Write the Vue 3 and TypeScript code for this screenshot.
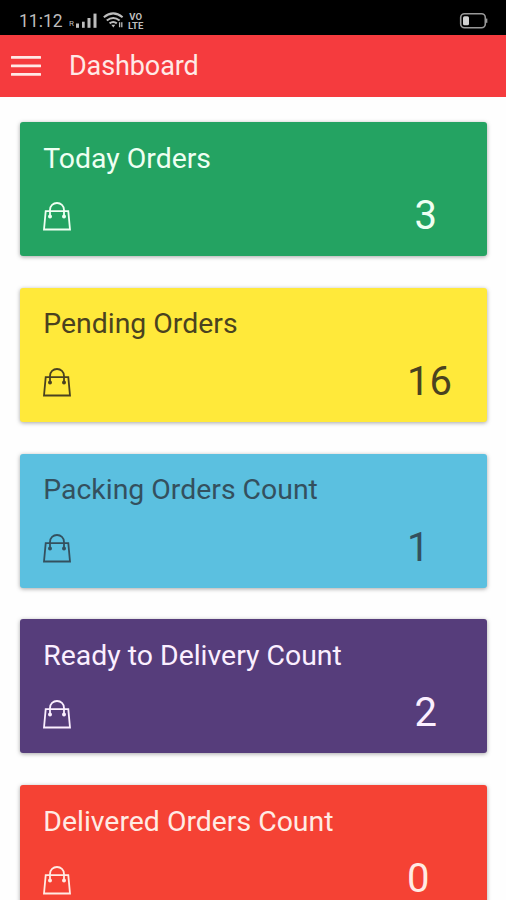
<script setup lang="ts">
interface OrderCard {
  title: string
  count: number
  tone: 'green' | 'yellow' | 'blue' | 'purple' | 'red'
  inset?: boolean
}

const cards: OrderCard[] = [
  { title: 'Today Orders', count: 3, tone: 'green', inset: true },
  { title: 'Pending Orders', count: 16, tone: 'yellow' },
  { title: 'Packing Orders Count', count: 1, tone: 'blue' },
  { title: 'Ready to Delivery Count', count: 2, tone: 'purple', inset: true },
  { title: 'Delivered Orders Count', count: 0, tone: 'red' },
]
</script>

<template>
  <div class="screen">
    <div class="status">
      <span class="time">11:12</span>
      <span class="roaming">R</span>
      <svg class="signal" width="21" height="16" viewBox="0 0 21 16" fill="currentColor">
        <rect x="0" y="10.5" width="3" height="4.3" />
        <rect x="6" y="8.7" width="2.7" height="6.1" />
        <rect x="11.5" y="5" width="3" height="9.8" />
        <rect x="17.5" y="0.6" width="3" height="14.2" />
      </svg>
      <svg class="wifi" width="21" height="17" viewBox="0 0 21 17" fill="none" stroke="currentColor" stroke-width="2">
        <path d="M.8 5.3Q10.2-2.5 19.6 5.3" />
        <path d="M3.8 8.6Q10.2 3.3 16.6 8.6" />
        <path d="M6.6 11.4Q10.2 8.6 13.8 11.4" />
        <path d="M8.3 12.8h4l-2 2.7z" fill="currentColor" stroke="none" />
        <path d="M16.6 10.2v5M18.8 10.2v5" stroke-width="1.3" />
      </svg>
      <span class="volte"><span>VO</span><span>LTE</span></span>
      <svg class="battery" width="30" height="18" viewBox="0 0 30 18" fill="none">
        <rect x="1.7" y="1.7" width="24.6" height="14" rx="3.8" stroke="#999" stroke-width="1.6" />
        <rect x="4" y="4.2" width="6" height="9" rx="1.5" fill="#d2d2d2" />
        <path d="M27.6 6.6v4.2" stroke="#999" stroke-width="1.5" />
      </svg>
    </div>

    <header class="bar">
      <svg class="menu" width="30" height="22" viewBox="0 0 30 22" fill="currentColor">
        <rect y="1" width="30" height="2.8" rx="0.5" />
        <rect y="9.5" width="30" height="2.8" rx="0.5" />
        <rect y="18" width="30" height="2.8" rx="0.5" />
      </svg>
      <h1>Dashboard</h1>
    </header>

    <main class="cards">
      <section v-for="card in cards" :key="card.title" class="card" :class="card.tone">
        <h2>{{ card.title }}</h2>
        <div class="row">
          <svg class="bag" width="28" height="29" viewBox="0 0 28 29" fill="none" stroke="currentColor" stroke-width="1.8">
            <path d="M2.7 9.2H25.3L27 27.5H1z" />
            <path d="M7 14.5V8C7 3.7 10.2 1 14 1S21 3.7 21 8v6.5" />
            <circle cx="7" cy="14.6" r="2" fill="currentColor" stroke="none" />
            <circle cx="21" cy="14.6" r="2" fill="currentColor" stroke="none" />
          </svg>
          <span class="count" :class="{ inset: card.inset }">{{ card.count }}</span>
        </div>
      </section>
    </main>
  </div>
</template>

<style>
body {
  margin: 0;
  background: #fefefe;
}
</style>

<style scoped>
.screen {
  height: 100vh;
  overflow: hidden;
  display: flex;
  flex-direction: column;
  background: #fefefe;
  font-family: Roboto, sans-serif;
}

.status {
  flex: none;
  box-sizing: border-box;
  height: 35px;
  padding: 6px 17px 0 19px;
  display: flex;
  align-items: center;
  background: #000;
  color: #bdbdbd;
}

.time {
  width: 50px;
  font-size: 17.5px;
  line-height: 20px;
}

.roaming {
  width: 7px;
  padding-top: 7px;
  font-size: 8px;
  line-height: 8px;
}

.wifi {
  margin-left: 6px;
}

.volte {
  display: flex;
  flex-direction: column;
  align-items: center;
  margin-left: 4px;
  font-size: 9.5px;
  font-weight: 700;
  line-height: 9px;
}

.battery {
  margin-left: auto;
}

.bar {
  flex: none;
  box-sizing: border-box;
  height: 62px;
  padding: 0 11px;
  display: flex;
  align-items: center;
  gap: 28px;
  background: #f53b3e;
  color: #ffe9e6;
}

h1,
h2 {
  margin: 0;
  font-weight: 400;
  line-height: 32px;
}

h1 {
  font-size: 27px;
  letter-spacing: -0.1px;
}

h2 {
  font-size: 28.4px;
}

.cards {
  padding: 25px 19px 0 20px;
  display: flex;
  flex-direction: column;
  gap: 31.8px;
}

.card {
  flex: none;
  box-sizing: border-box;
  height: 134px;
  padding: 20.6px 0 0 23.3px;
  border-radius: 3px;
  box-shadow: 0 1px 4px rgba(0, 0, 0, 0.35);
}

.row {
  display: flex;
  justify-content: space-between;
  align-items: center;
  height: 48px;
  margin-top: 17.4px;
}

.bag {
  margin-top: 2px;
}

.count {
  width: 80px;
  font-size: 40px;
  line-height: 42px;
}

.count.inset {
  width: 72.5px;
}

.green {
  background: #24a362;
  color: #effff2;
}

.yellow {
  background: #ffe93a;
  color: #4a4220;
}

.blue {
  background: #5bc0e0;
  color: #34505e;
}

.purple {
  background: #563d7b;
  color: #fbefff;
}

.red {
  background: #f54234;
  color: #ffebe4;
}
</style>
